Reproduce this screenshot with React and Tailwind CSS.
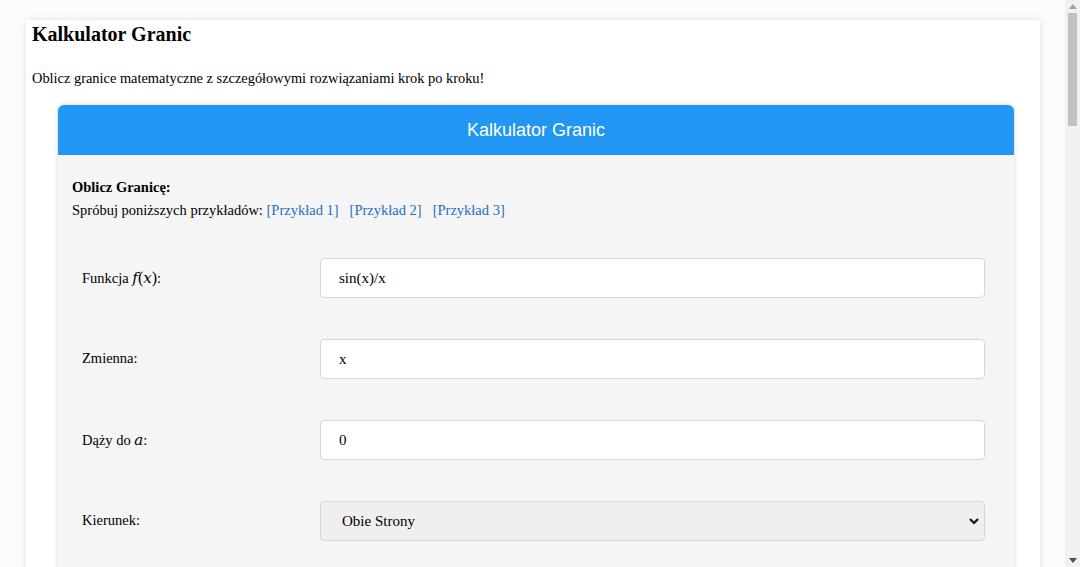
import React from 'react';

const mathCls = "font-['DejaVu_Serif',serif] text-[15px] italic";

const rows = [
  { label: <>Funkcja <span className={mathCls}>f</span><span className="text-[16px]">(</span><span className={mathCls}>x</span><span className="text-[16px]">)</span>:</>, value: 'sin(x)/x' },
  { label: 'Zmienna:', value: 'x' },
  { label: <>Dąży do <span className={mathCls}>a</span>:</>, value: '0' },
];

function Scrollbar() {
  return (
    <div className="relative flex h-full w-[15px] shrink-0 flex-col items-center bg-[#f1f1f1]">
      <svg className="mt-[4px]" width="8" height="5" viewBox="0 0 8 5"><path d="M0 5L4 0l4 5z" fill="#a3a3a3" /></svg>
      <div className="mt-[4px] h-[113px] w-[9px] bg-[#c1c1c1]" />
      <svg className="absolute bottom-[4px]" width="8" height="5" viewBox="0 0 8 5"><path d="M0 0h8L4 5z" fill="#505050" /></svg>
    </div>
  );
}

export default function App() {
  return (
    <div className="flex h-[567px] overflow-hidden bg-[#fcfcfc] font-['Liberation_Serif',serif] text-black">
      <div className="flex-1 overflow-hidden">
        <div className="ml-[26px] mt-[20px] w-[1014px] bg-white px-[6px] pb-10 shadow-[0_0_6px_rgba(0,0,0,0.12)]">
          <h1 className="text-[20px] font-bold leading-[28px]">Kalkulator Granic</h1>
          <p className="mt-[20px] text-[14.4px] leading-[20px]">
            Oblicz granice matematyczne z szczegółowymi rozwiązaniami krok po kroku!
          </p>

          <div className="ml-[26px] mr-[20px] mt-[17px] overflow-hidden rounded-[6px] bg-[#f5f5f5] shadow-[0_0_5px_rgba(0,0,0,0.18)]">
            <div className="flex h-[50px] items-center justify-center bg-[#2196f3] font-['Liberation_Sans',sans-serif] text-[18px] text-white">
              Kalkulator Granic
            </div>

            <div className="px-[14px] pb-10 pt-[23px] text-[14.5px]">
              <div className="font-bold leading-[18px]">Oblicz Granicę:</div>
              <div className="mt-[4px] leading-[20px]">
                Spróbuj poniższych przykładów:{' '}
                <a className="text-[#1e6fc0]">[Przykład 1]</a>
                <a className="ml-[11px] text-[#1e6fc0]">[Przykład 2]</a>
                <a className="ml-[11px] text-[#1e6fc0]">[Przykład 3]</a>
              </div>

              <div className="mt-[38px] flex flex-col gap-[41px] pl-[10px] pr-[15px]">
                {rows.map((r, i) => (
                  <div key={i} className="flex items-center">
                    <div className="w-[238px] shrink-0">{r.label}</div>
                    <div className="flex h-[40px] flex-1 items-center rounded-[4px] border border-[#d6d6d6] bg-white px-[18px] text-[15px]">
                      {r.value}
                    </div>
                  </div>
                ))}
                <div className="flex items-center">
                  <div className="w-[238px] shrink-0">Kierunek:</div>
                  <div className="flex h-[40px] flex-1 items-center justify-between rounded-[4px] border border-[#d6d6d6] bg-[#efefef] pl-[21px] pr-[4px] text-[15px]">
                    <span>Obie Strony</span>
                    <svg width="12" height="12" viewBox="0 0 12 12" fill="none" stroke="#111" strokeWidth="2.2">
                      <path d="M2 4l4 4 4-4" />
                    </svg>
                  </div>
                </div>
                <div className="h-[40px]" />
              </div>
            </div>
          </div>
        </div>
      </div>
      <Scrollbar />
    </div>
  );
}
